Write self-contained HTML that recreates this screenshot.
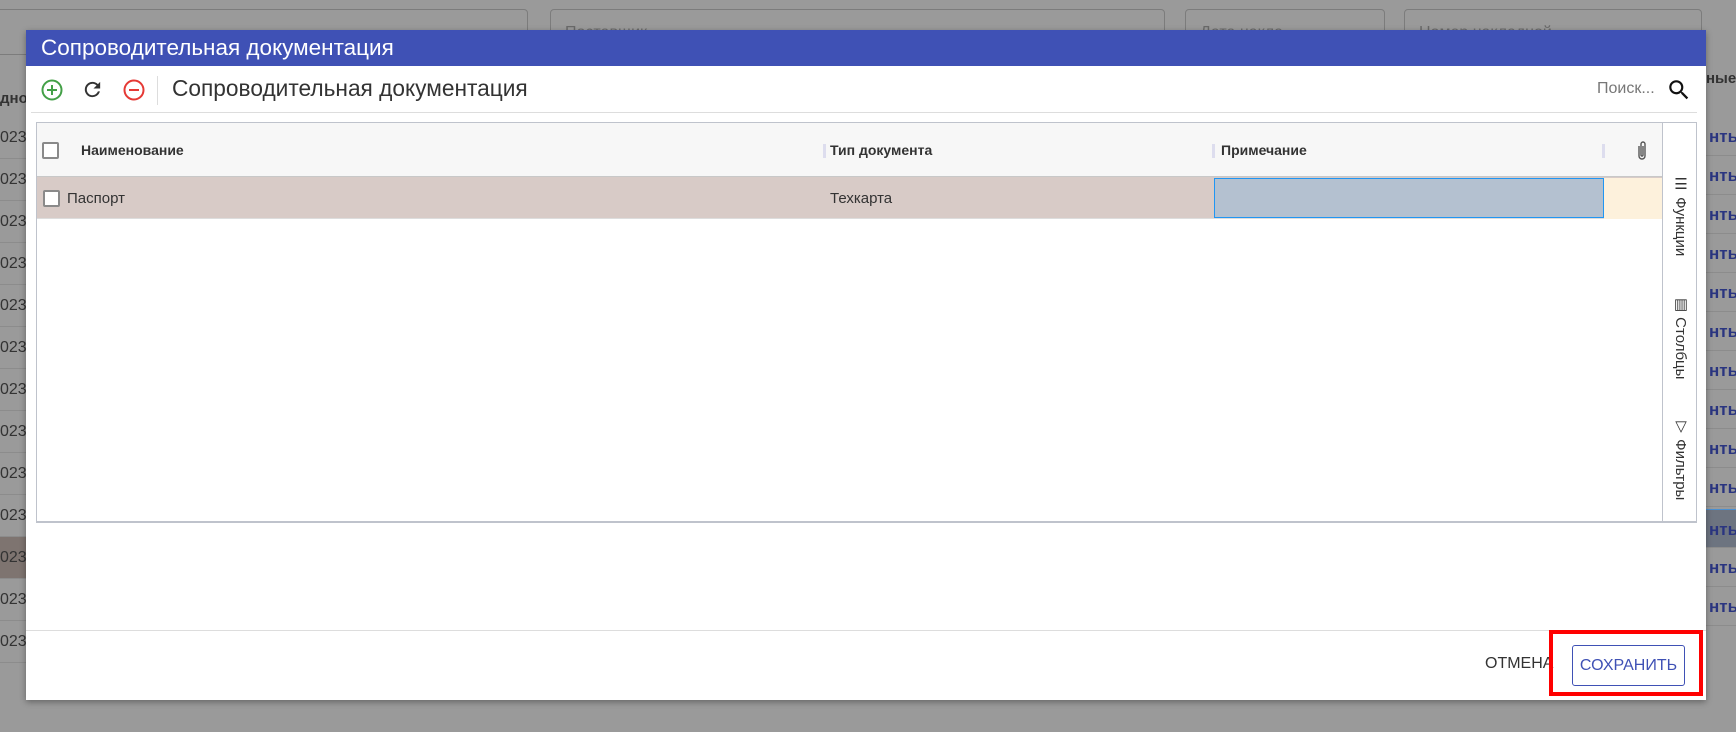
<!DOCTYPE html>
<html><head><meta charset="utf-8"><style>
*{box-sizing:border-box;margin:0;padding:0}
body{width:1736px;height:732px;overflow:hidden;background:#9a9a9a;font-family:"Liberation Sans",Arial,sans-serif;position:relative}
.a{position:absolute}
.inp{position:absolute;top:9px;height:46px;border:1px solid #7c7c7c;border-radius:4px;color:#6a6a6a;font-size:16px;padding:14px 14px}
.lrow{position:absolute;left:0;width:30px;height:42px;border-bottom:1px solid #8c8c8c;font-size:16px;color:#333;line-height:42px}
.rrow{position:absolute;left:1706px;width:30px;height:39px;border-bottom:1px solid #8c8c8c;font-size:17px;color:#2a3580;font-weight:bold;line-height:39px;padding-left:3px;overflow:hidden;white-space:nowrap}
.dlg{position:absolute;left:26px;top:30px;width:1680px;height:670px;background:#fff;box-shadow:0 2px 6px rgba(0,0,0,.35)}
.vt{position:absolute;writing-mode:vertical-rl;font-size:15px;color:#333;left:1645px}
.cb{position:absolute;width:17px;height:17px;border:2px solid #8a8a8a;border-radius:2px;background:#fff}
</style></head><body>
<div class="inp" style="left:-10px;width:538px"></div>
<div class="inp" style="left:550px;width:615px">Поставщик</div>
<div class="inp" style="left:1185px;width:200px">Дата накла</div>
<div class="inp" style="left:1404px;width:298px">Номер накладной</div>
<div class="a" style="left:0;top:90px;font-size:15px;font-weight:bold;color:#333">дно</div>
<div class="a" style="left:1706px;top:70px;font-size:15px;font-weight:bold;color:#333">ные</div>
<div class="lrow" style="top:117px">023</div><div class="lrow" style="top:159px">023</div><div class="lrow" style="top:201px">023</div><div class="lrow" style="top:243px">023</div><div class="lrow" style="top:285px">023</div><div class="lrow" style="top:327px">023</div><div class="lrow" style="top:369px">023</div><div class="lrow" style="top:411px">023</div><div class="lrow" style="top:453px">023</div><div class="lrow" style="top:495px">023</div><div class="lrow" style="top:537px;background:#7e7470">023</div><div class="lrow" style="top:579px">023</div><div class="lrow" style="top:621px">023</div>
<div class="rrow" style="top:117px">нты</div><div class="rrow" style="top:156px">нты</div><div class="rrow" style="top:195px">нты</div><div class="rrow" style="top:234px">нты</div><div class="rrow" style="top:273px">нты</div><div class="rrow" style="top:312px">нты</div><div class="rrow" style="top:351px">нты</div><div class="rrow" style="top:390px">нты</div><div class="rrow" style="top:429px">нты</div><div class="rrow" style="top:468px">нты</div><div class="rrow" style="top:509px;background:#6d7480;border-top:1px solid #4a8fd0">нты</div><div class="rrow" style="top:548px">нты</div><div class="rrow" style="top:587px">нты</div>

<div class="dlg">
 <div class="a" style="left:0;top:0;width:1680px;height:36px;background:#3f51b5;color:#fff;font-size:22.5px;line-height:36px;padding-left:15px">Сопроводительная документация</div>
 <svg class="a" style="left:15px;top:49px" width="22" height="22" viewBox="0 0 22 22"><circle cx="11" cy="11" r="9.5" fill="none" stroke="#43a047" stroke-width="2"/><path d="M11 6v10M6 11h10" stroke="#43a047" stroke-width="2"/></svg>
 <svg class="a" style="left:55px;top:48px" width="23" height="23" viewBox="0 0 24 24"><path d="M17.65 6.35A7.96 7.96 0 0 0 12 4a8 8 0 1 0 7.73 10h-2.08A6 6 0 1 1 12 6c1.66 0 3.14.69 4.22 1.78L13 11h7V4l-2.35 2.35z" fill="#333"/></svg>
 <svg class="a" style="left:97px;top:49px" width="22" height="22" viewBox="0 0 22 22"><circle cx="11" cy="11" r="9.5" fill="none" stroke="#e53935" stroke-width="2"/><path d="M6 11h10" stroke="#e53935" stroke-width="2"/></svg>
 <div class="a" style="left:131px;top:46px;width:1px;height:29px;background:#ddd"></div>
 <div class="a" style="left:146px;top:45px;font-size:22.7px;color:#333">Сопроводительная документация</div>
 <div class="a" style="left:1571px;top:50px;font-size:16px;color:#777">Поиск...</div>
 <svg class="a" style="left:1640px;top:47px" width="26" height="26" viewBox="0 0 24 24"><path d="M15.5 14h-.79l-.28-.27A6.47 6.47 0 0 0 16 9.5 6.5 6.5 0 1 0 9.5 16c1.61 0 3.09-.59 4.23-1.57l.27.28v.79l5 4.99L20.49 19l-4.99-5zm-6 0C7.01 14 5 11.99 5 9.5S7.01 5 9.5 5 14 7.01 14 9.5 11.99 14 9.5 14z" fill="#111"/></svg>
 <div class="a" style="left:5px;top:82px;width:1666px;height:1px;background:#ddd"></div>
 <div class="a" style="left:10px;top:92px;width:1661px;height:401px;border:1px solid #bfc3cc;border-bottom:2px solid #bfc3cc"></div>
 <div class="a" style="left:11px;top:93px;width:1625px;height:54px;background:#f7f7f7;border-bottom:1px solid #c8c8c8"></div>
 <div class="cb" style="left:16px;top:112px"></div>
 <div class="a" style="left:55px;top:112px;font-size:14px;font-weight:bold;color:#333">Наименование</div>
 <div class="a" style="left:797px;top:114px;width:3px;height:14px;background:#dde"></div>
 <div class="a" style="left:804px;top:112px;font-size:14px;font-weight:bold;color:#333">Тип документа</div>
 <div class="a" style="left:1186px;top:114px;width:3px;height:14px;background:#dde"></div>
 <div class="a" style="left:1195px;top:112px;font-size:14px;font-weight:bold;color:#333">Примечание</div>
 <div class="a" style="left:1576px;top:114px;width:3px;height:14px;background:#dde"></div>
 <svg class="a" style="left:1610px;top:110px" width="12" height="22" viewBox="0 0 12 22"><path d="M3 6v10a3 3 0 0 0 6 0V4a2 2 0 0 0-4 0v11a1 1 0 0 0 2 0V6" fill="none" stroke="#555" stroke-width="1.4"/></svg>
 <div class="a" style="left:11px;top:147px;width:1625px;height:42px;background:#d8cbc7;border-bottom:1px solid #ddd"></div>
 <div class="a" style="left:1188px;top:148px;width:390px;height:40px;background:#b4c1d0;border:1px solid #2196f3"></div>
 <div class="a" style="left:1578px;top:148px;width:58px;height:41px;background:#fdf1dc"></div>
 <div class="cb" style="left:17px;top:160px"></div>
 <div class="a" style="left:41px;top:160px;font-size:15px;color:#333">Паспорт</div>
 <div class="a" style="left:804px;top:160px;font-size:15px;color:#333">Техкарта</div>
 <div class="a" style="left:1636px;top:93px;width:1px;height:399px;background:#bfc3cc"></div>
 <div class="vt" style="top:145px">☰&nbsp;Функции</div>
 <div class="vt" style="top:265px">▥&nbsp;Столбцы</div>
 <div class="vt" style="top:387px">▽&nbsp;Фильтры</div>
 <div class="a" style="left:0;top:600px;width:1680px;height:1px;background:#ddd"></div>
 <div class="a" style="left:1459px;top:625px;font-size:16px;color:#333">ОТМЕНА</div>
 <div class="a" style="left:1523px;top:600px;width:154px;height:66px;border:4px solid #f00"></div>
 <div class="a" style="left:1546px;top:615px;width:113px;height:41px;border:1px solid #3f51b5;border-radius:3px;color:#3f51b5;font-size:16px;line-height:39px;text-align:center">СОХРАНИТЬ</div>
</div>
</body></html>
